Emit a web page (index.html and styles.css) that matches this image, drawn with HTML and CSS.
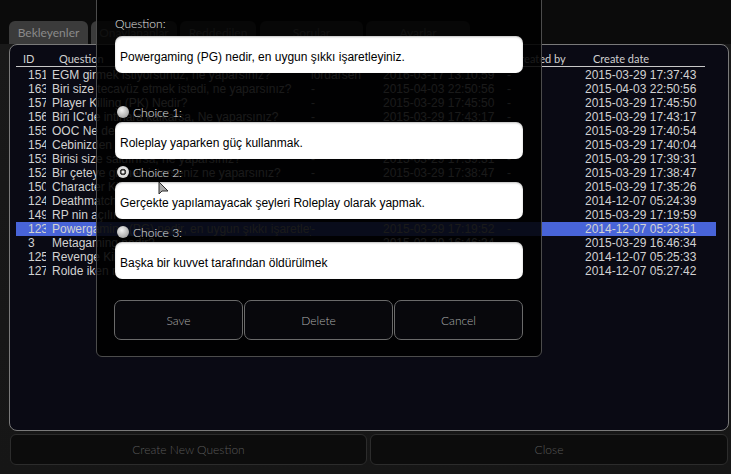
FILE: index.html
```html
<!DOCTYPE html>
<html lang="tr">
<head>
    <meta charset="UTF-8">
    <meta name="viewport" content="width=device-width, initial-scale=1.0">
    <title>Questions</title>
    <link rel="stylesheet" href="styles.css">
</head>
<body>

<div class="screen">

    <!-- Question list window -->
    <div class="window">
        <div class="tabs">
            <div class="tab tab-1">Bekleyenler</div>
            <div class="tab tab-2">Onaylananlar</div>
            <div class="tab tab-3">Reddedilen</div>
            <div class="tab tab-4">Sorular</div>
            <div class="tab tab-5">Ayarlar</div>
        </div>

        <div class="panel">
            <div class="list-head">
                <span>ID</span><span>Question</span><span>Updated by</span><span>Update date</span><span>Created by</span><span>Create date</span>
            </div>
            <div class="rows">
                <div class="row"><span class="id">151</span><span>EGM girmek istiyorsunuz, ne yaparsınız?</span><span>lordarsen</span><span>2016-03-17 13:10:59</span><span>-</span><span>2015-03-29 17:37:43</span></div>
                <div class="row"><span class="id">163</span><span>Biri size tecavüz etmek istedi, ne yaparsınız?</span><span>-</span><span>2015-04-03 22:50:56</span><span>-</span><span>2015-04-03 22:50:56</span></div>
                <div class="row"><span class="id">157</span><span>Player Killing (PK) Nedir?</span><span>-</span><span>2015-03-29 17:45:50</span><span>-</span><span>2015-03-29 17:45:50</span></div>
                <div class="row"><span class="id">156</span><span>Biri IC'de intihara kalkarsa, Ne yaparsınız?</span><span>-</span><span>2015-03-29 17:43:17</span><span>-</span><span>2015-03-29 17:43:17</span></div>
                <div class="row"><span class="id">155</span><span>OOC Ne demektir?</span><span>-</span><span>2015-03-29 17:40:54</span><span>-</span><span>2015-03-29 17:40:54</span></div>
                <div class="row"><span class="id">154</span><span>Cebinizden para çalındı, ne yaparsınız?</span><span>-</span><span>2015-03-29 17:40:04</span><span>-</span><span>2015-03-29 17:40:04</span></div>
                <div class="row"><span class="id">153</span><span>Birisi size saldırırsa, ne yaparsınız?</span><span>-</span><span>2015-03-29 17:39:31</span><span>-</span><span>2015-03-29 17:39:31</span></div>
                <div class="row"><span class="id">152</span><span>Bir çeteye girmek isterseniz ne yaparsınız?</span><span>-</span><span>2015-03-29 17:38:47</span><span>-</span><span>2015-03-29 17:38:47</span></div>
                <div class="row"><span class="id">150</span><span>Character Kill (CK) nedir?</span><span>-</span><span>2015-03-29 17:35:26</span><span>-</span><span>2015-03-29 17:35:26</span></div>
                <div class="row"><span class="id">124</span><span>Deathmatch (DM) nedir?</span><span>-</span><span>2014-12-07 05:24:39</span><span>-</span><span>2014-12-07 05:24:39</span></div>
                <div class="row"><span class="id">149</span><span>RP nin açılımı nedir?</span><span>-</span><span>2015-03-29 17:19:59</span><span>-</span><span>2015-03-29 17:19:59</span></div>
                <div class="row selected"><span class="id">123</span><span>Powergaming (PG) nedir, en uygun şıkkı işaretleyiniz.</span><span>-</span><span>2015-03-29 17:19:52</span><span>-</span><span>2014-12-07 05:23:51</span></div>
                <div class="row"><span class="id">3</span><span>Metagaming nedir?</span><span>-</span><span>2015-03-29 16:46:34</span><span>-</span><span>2015-03-29 16:46:34</span></div>
                <div class="row"><span class="id">125</span><span>Revenge Kill nedir?</span><span>-</span><span>2014-12-07 05:25:33</span><span>-</span><span>2014-12-07 05:25:33</span></div>
                <div class="row"><span class="id">127</span><span>Rolde iken ne yapmamalısınız?</span><span>-</span><span>2014-12-07 05:27:42</span><span>-</span><span>2014-12-07 05:27:42</span></div>
            </div>
        </div>

        <div class="actions">
            <button class="btn-main">Create New Question</button>
            <button class="btn-main btn-close">Close</button>
        </div>
    </div>

    <!-- Edit question dialog -->
    <div class="dialog">
        <div class="q-label">Question:</div>
        <div class="field">Powergaming (PG) nedir, en uygun şıkkı işaretleyiniz.</div>

        <div class="choice first"><span class="radio"></span>Choice 1:</div>
        <div class="field choice-field">Roleplay yaparken güç kullanmak.</div>

        <div class="choice"><span class="radio checked"></span>Choice 2:</div>
        <div class="field choice-field">Gerçekte yapılamayacak şeyleri Roleplay olarak yapmak.</div>

        <div class="choice"><span class="radio"></span>Choice 3:</div>
        <div class="field choice-field">Başka bir kuvvet tarafından öldürülmek</div>

        <div class="buttons">
            <button class="btn">Save</button>
            <button class="btn btn-wide">Delete</button>
            <button class="btn">Cancel</button>
        </div>
    </div>

    <!-- mouse pointer -->
    <svg class="cursor" width="12" height="16" viewBox="0 0 12 16">
        <polygon points="1,1 1,13 4,10 10,10" fill="#a8a8a8" stroke="#2a2a2a" stroke-width="1"/>
    </svg>

</div>

</body>
</html>
```

FILE: styles.css
```css
* { margin: 0; padding: 0; box-sizing: border-box; }
body { background: #121212; font-family: "Liberation Sans", Arial, sans-serif; font-size: 12px; color: #d2d2d2; overflow: hidden; }
button { font-family: Lato, "Liberation Sans", sans-serif; font-size: 12px; font-weight: 300; cursor: pointer; }

.screen { position: relative; width: 731px; height: 474px; overflow: hidden; background: linear-gradient(#0b0b0b 0, #0b0b0b 44px, #191919 44px, #161616 100%); }

/* list window */
.window { padding: 21px 2px 0 9px; }
.tabs { display: flex; gap: 3px; height: 23px; }
.tab { background: #3b3b3b; color: #8a8a8a; border-radius: 6px 6px 0 0; font-family: Lato, "Liberation Sans", sans-serif; font-size: 12px; line-height: 24px; text-align: center; overflow: hidden; white-space: nowrap; }
.tab-1 { width: 79px; }
.tab-2 { width: 86px; }
.tab-3 { width: 76px; }
.tab-4 { width: 103px; margin-left: 1px; }
.tab-5 { width: 104px; }

.panel { width: 720px; height: 387px; background: #0a0a14; border: 1px solid #7a7a7a; border-radius: 8px; padding: 0 6px; }

.list-head { display: grid; grid-template-columns: 36px 259px 72px 123px 80px auto; width: 689px; height: 22px; padding: 7px 0 0 7px; border-bottom: 1px solid #c8c8c8; font-family: Lato, "Liberation Sans", sans-serif; font-size: 11px; line-height: 14px; color: #d0d0d0; white-space: nowrap; }

.rows { margin-top: 1px; width: 700px; }
.row { display: grid; grid-template-columns: 24px 259px 72px 124px 78px auto; height: 14px; line-height: 14px; padding-left: 12px; white-space: nowrap; }
.row span { overflow: hidden; }
.row .id { width: 18px; }
.row.selected { background: #4864d8; }

.actions { display: flex; gap: 3px; margin-top: 3px; padding-left: 1px; }
.btn-main { width: 357px; height: 31px; background: #0c0c0c; border: 1px solid #2c2c2c; border-radius: 6px; color: #595959; }
.btn-close { width: 358px; }

/* dialog */
.dialog { position: absolute; left: 96px; top: -10px; width: 446px; background: rgba(0, 0, 0, 0.88); border: 1px solid #4c4c4c; border-radius: 6px; padding: 25px 18px 16px 18px; }
.q-label { font-family: Lato, "Liberation Sans", sans-serif; font-size: 12px; font-weight: 300; line-height: 16px; color: #e4e4e4; }
.field { margin-top: 4px; height: 37px; background: #fff; border-radius: 7px; padding: 4px 5px 0; display: flex; align-items: center; color: #000; white-space: nowrap; box-shadow: inset 0 1px 2px rgba(0, 0, 0, 0.25); }
.choice-field { margin-top: 2px; }

.choice { display: flex; align-items: center; gap: 4px; height: 16px; margin-top: 5px; padding-left: 2px; font-family: Lato, "Liberation Sans", sans-serif; font-size: 12px; font-weight: 300; color: #e4e4e4; }
.choice.first { margin-top: 31px; }
.radio { width: 12px; height: 12px; border-radius: 50%; background: radial-gradient(circle at 40% 35%, #f2f2f2 0, #c4c4c4 45%, #8a8a8a 100%); }
.radio.checked { background: radial-gradient(circle at 50% 50%, #f0f0f0 0, #f0f0f0 1px, #3a3a3a 2px, #3a3a3a 3px, #e6e6e6 3.6px, #bdbdbd 100%); }

.buttons { display: flex; gap: 1px; margin: 21px 0 0 -1px; }
.btn { width: 129px; height: 40px; background: #08080c; border: 1px solid #6a6a6a; border-radius: 7px; color: #adadad; }
.btn-wide { width: 149px; }

.cursor { position: absolute; left: 158px; top: 181px; }
```
